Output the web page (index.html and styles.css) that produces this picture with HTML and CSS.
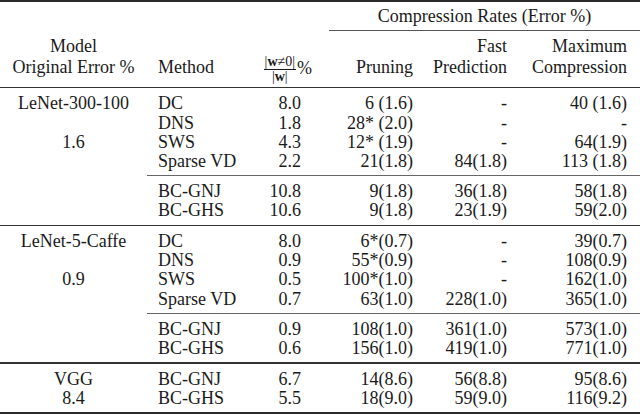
FILE: index.html
```html
<!DOCTYPE html>
<html>
<head>
<meta charset="utf-8">
<link rel="stylesheet" href="styles.css">
</head>
<body>
<div class="table">
  <div class="rule top"></div>
  <div class="row">
    <div class="span-cr">Compression Rates (Error %)</div>
  </div>
  <div class="rule cmid"></div>
  <div class="row">
    <div class="c1">Model</div><div class="c2"></div><div class="c3"></div><div class="c4"></div><div class="c5">Fast</div><div class="c6">Maximum</div>
  </div>
  <div class="row head-c">
    <div class="c1">Original Error %</div><div class="c2">Method</div>
    <div class="c3 hfrac"><span class="frac"><span class="num">|<b>w</b>≠0|</span><span class="den">|<b>w</b>|</span></span>%</div>
    <div class="c4">Pruning</div><div class="c5">Prediction</div><div class="c6">Compression</div>
  </div>
  <div class="rule mid"></div>

  <div class="row"><div class="c1">LeNet-300-100</div><div class="c2">DC</div><div class="c3">8.0</div><div class="c4">6 (1.6)</div><div class="c5">-</div><div class="c6">40 (1.6)</div></div>
  <div class="row"><div class="c1"></div><div class="c2">DNS</div><div class="c3">1.8</div><div class="c4">28* (2.0)</div><div class="c5">-</div><div class="c6">-</div></div>
  <div class="row"><div class="c1">1.6</div><div class="c2">SWS</div><div class="c3">4.3</div><div class="c4">12* (1.9)</div><div class="c5">-</div><div class="c6">64(1.9)</div></div>
  <div class="row"><div class="c1"></div><div class="c2">Sparse VD</div><div class="c3">2.2</div><div class="c4">21(1.8)</div><div class="c5">84(1.8)</div><div class="c6">113 (1.8)</div></div>
  <div class="rule sub"></div>
  <div class="row"><div class="c1"></div><div class="c2">BC-GNJ</div><div class="c3">10.8</div><div class="c4">9(1.8)</div><div class="c5">36(1.8)</div><div class="c6">58(1.8)</div></div>
  <div class="row"><div class="c1"></div><div class="c2">BC-GHS</div><div class="c3">10.6</div><div class="c4">9(1.8)</div><div class="c5">23(1.9)</div><div class="c6">59(2.0)</div></div>
  <div class="rule mid"></div>

  <div class="row"><div class="c1">LeNet-5-Caffe</div><div class="c2">DC</div><div class="c3">8.0</div><div class="c4">6*(0.7)</div><div class="c5">-</div><div class="c6">39(0.7)</div></div>
  <div class="row"><div class="c1"></div><div class="c2">DNS</div><div class="c3">0.9</div><div class="c4">55*(0.9)</div><div class="c5">-</div><div class="c6">108(0.9)</div></div>
  <div class="row"><div class="c1">0.9</div><div class="c2">SWS</div><div class="c3">0.5</div><div class="c4">100*(1.0)</div><div class="c5">-</div><div class="c6">162(1.0)</div></div>
  <div class="row"><div class="c1"></div><div class="c2">Sparse VD</div><div class="c3">0.7</div><div class="c4">63(1.0)</div><div class="c5">228(1.0)</div><div class="c6">365(1.0)</div></div>
  <div class="rule sub"></div>
  <div class="row"><div class="c1"></div><div class="c2">BC-GNJ</div><div class="c3">0.9</div><div class="c4">108(1.0)</div><div class="c5">361(1.0)</div><div class="c6">573(1.0)</div></div>
  <div class="row"><div class="c1"></div><div class="c2">BC-GHS</div><div class="c3">0.6</div><div class="c4">156(1.0)</div><div class="c5">419(1.0)</div><div class="c6">771(1.0)</div></div>
  <div class="rule mid"></div>

  <div class="row"><div class="c1">VGG</div><div class="c2">BC-GNJ</div><div class="c3">6.7</div><div class="c4">14(8.6)</div><div class="c5">56(8.8)</div><div class="c6">95(8.6)</div></div>
  <div class="row"><div class="c1">8.4</div><div class="c2">BC-GHS</div><div class="c3">5.5</div><div class="c4">18(9.0)</div><div class="c5">59(9.0)</div><div class="c6">116(9.2)</div></div>
  <div class="rule bottom"></div>
</div>
</body>
</html>
```
FILE: styles.css
```css
html, body {
  margin: 0;
  padding: 0;
  background: #ffffff;
}

.table {
  width: 640px;
  font-family: "Liberation Serif", "Times New Roman", serif;
  font-size: 18px;
  color: #1a1a1a;
}

.row {
  display: grid;
  grid-template-columns: 147px 85px 80px 112px 94px 122px;
  height: 19.2px;
  line-height: 19.2px;
  white-space: nowrap;
}

.c1 { text-align: center; }
.c2 { padding-left: 11px; }
.c3, .c4, .c5 { text-align: right; padding-right: 11px; }
.c6 { text-align: right; padding-right: 13px; }

.span-cr {
  grid-column: 4 / 7;
  text-align: center;
  padding-left: 17px;
}

.head-c {
  height: 22.5px;
  line-height: 22.5px;
  padding-bottom: 4.35px;
}

.hfrac {
  padding-right: 0;
}

.frac {
  display: inline-flex;
  flex-direction: column;
  align-items: center;
  font-size: 14px;
  line-height: 12px;
  vertical-align: middle;
  margin-right: 1px;
}

.num {
  border-bottom: 1px solid #1a1a1a;
  padding: 0 1px 1px;
}

.den {
  padding-top: 1px;
}

.rule { background: #2a2a2a; }

.rule.top {
  height: 2px;
  margin-bottom: 5.25px;
}

.rule.cmid {
  height: 1px;
  margin: 3.25px 0 6.25px 329px;
  background: #555;
}

.rule.mid {
  height: 1.5px;
  margin: 4px 0 6px;
  background: #333;
}

.rule.sub {
  height: 1px;
  margin: 4px 0 6px 147px;
  background: #666;
}

.rule.bottom {
  height: 2px;
  margin-top: 4px;
}
```
